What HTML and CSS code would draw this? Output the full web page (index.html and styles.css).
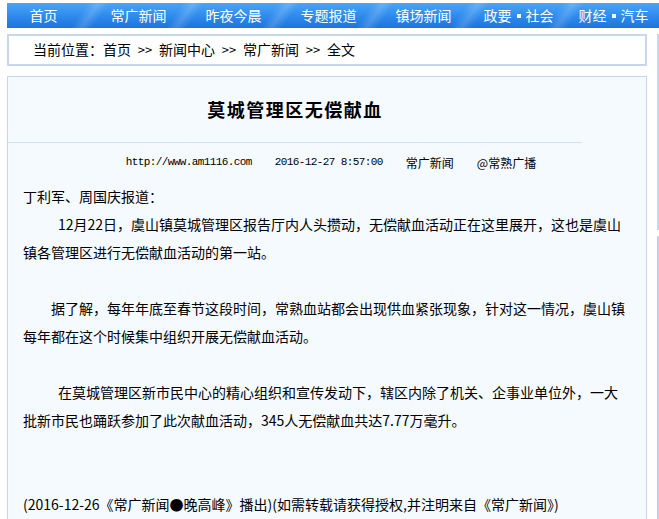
FILE: index.html
```html
<!DOCTYPE html>
<html lang="zh-CN">
<head>
<meta charset="utf-8">
<title>莫城管理区无偿献血</title>
<link rel="stylesheet" href="styles.css">
</head>
<body>
<div class="page">
  <nav class="nav">
    <ul class="nav-list">
      <li class="nav-item">首页</li>
      <li class="nav-item">常广新闻</li>
      <li class="nav-item">昨夜今晨</li>
      <li class="nav-item">专题报道</li>
      <li class="nav-item">镇场新闻</li>
      <li class="nav-item">政要<span class="dot"></span>社会</li>
      <li class="nav-item">财经<span class="dot"></span>汽车</li>
    </ul>
  </nav>
  <div class="layout">
    <main class="main">
      <div class="crumb">当前位置：首页<span class="sep">&gt;&gt;</span>新闻中心<span class="sep">&gt;&gt;</span>常广新闻<span class="sep">&gt;&gt;</span>全文</div>
      <article class="article">
        <div class="head">
          <h1 class="title">莫城管理区无偿献血</h1>
        </div>
        <div class="meta">
          <span class="mono url">http://www.am1116.com</span>
          <span class="mono date">2016-12-27 8:57:00</span>
          <span class="src">常广新闻</span>
          <span class="src">@常熟广播</span>
        </div>
        <div class="body">
          <p class="line">丁利军、周国庆报道：</p>
          <p class="line ind-a">12月22日，虞山镇莫城管理区报告厅内人头攒动，无偿献血活动正在这里展开，这也是虞山</p>
          <p class="line">镇各管理区进行无偿献血活动的第一站。</p>
          <p class="line blank"></p>
          <p class="line ind-b">据了解，每年年底至春节这段时间，常熟血站都会出现供血紧张现象，针对这一情况，虞山镇</p>
          <p class="line">每年都在这个时候集中组织开展无偿献血活动。</p>
          <p class="line blank"></p>
          <p class="line ind-a">在莫城管理区新市民中心的精心组织和宣传发动下，辖区内除了机关、企事业单位外，一大</p>
          <p class="line">批新市民也踊跃参加了此次献血活动，345人无偿献血共达7.77万毫升。</p>
          <p class="line blank"></p>
          <p class="line blank"></p>
          <p class="line">(2016-12-26《常广新闻●晚高峰》播出)(如需转载请获得授权,并注明来自《常广新闻》)</p>
        </div>
      </article>
    </main>
    <aside class="side">
      <div class="side-box"></div>
      <div class="side-box2"></div>
    </aside>
  </div>
</div>
</body>
</html>
```

FILE: styles.css
```css
html, body {
  margin: 0;
  padding: 0;
  background: #ffffff;
  overflow: hidden;
}
body {
  width: 659px;
  height: 519px;
  font-family: "Noto Sans CJK SC", "Liberation Sans", sans-serif;
  font-size: 14px;
  color: #000;
}
.page {
  padding: 3px 0 0 7px;
  overflow: hidden;
}
.nav {
  height: 25px;
  background: linear-gradient(#4aa5f6, #2f8cee 50%, #1c74dc);
  overflow: hidden;
}
.nav-list {
  list-style: none;
  margin: 0 0 0 -11px;
  padding: 0;
  display: flex;
  height: 25px;
}
.nav-item {
  position: relative;
  flex: 0 0 95px;
  text-align: center;
  line-height: 25px;
  color: #fff;
  font-size: 14px;
  white-space: nowrap;
}
.nav-item::before {
  content: "";
  position: absolute;
  top: 0;
  bottom: 0;
  left: -12px;
  width: 22px;
  transform: skewX(-35deg);
  background: linear-gradient(90deg, rgba(255,255,255,0), rgba(255,255,255,0.16), rgba(255,255,255,0));
}
.nav-item:first-child::before {
  display: none;
}
.dot {
  display: inline-block;
  width: 4px;
  height: 4px;
  background: #fff;
  margin: 0 5px;
  vertical-align: middle;
  position: relative;
  top: -1px;
}
.layout {
  display: flex;
  gap: 10px;
  margin-top: 6px;
}
.main {
  flex: 0 0 640px;
  width: 640px;
}
.crumb {
  box-sizing: border-box;
  height: 32px;
  border: 2px solid #c9d7ec;
  padding-left: 24px;
  line-height: 27px;
  font-size: 14px;
  white-space: nowrap;
}
.sep {
  display: inline-block;
  width: 28px;
  text-align: center;
  font-size: 13px;
}
.article {
  margin-top: 10px;
  border: 1px solid #c9d7ec;
  border-bottom: none;
  background: #f5faff;
  height: 460px;
}
.head {
  width: 574px;
  border-bottom: 1px solid #cfe2f7;
}
.title {
  margin: 0;
  height: 65px;
  line-height: 65px;
  text-align: center;
  font-size: 18px;
  font-weight: 700;
  letter-spacing: 1.5px;
}
.meta {
  height: 39px;
  line-height: 39px;
  display: flex;
  justify-content: center;
  gap: 23px;
  font-size: 12px;
  white-space: nowrap;
  padding-left: 8px;
}
.mono {
  font-family: "Liberation Mono", "DejaVu Sans Mono", monospace;
  font-size: 11px;
  letter-spacing: -0.6px;
}
.body {
  padding: 0 0 0 15px;
}
.line {
  margin: 0;
  height: 28px;
  line-height: 28px;
  white-space: nowrap;
}
.ind-a {
  padding-left: 35px;
}
.ind-b {
  padding-left: 28px;
}
.side {
  flex: 1 1 auto;
  min-width: 0;
}
.side-box {
  box-sizing: border-box;
  height: 196px;
  border: 2px solid #c9d7ec;
  border-right: none;
  background: #f5faff;
}
.side-box2 {
  margin-top: 6px;
  height: 290px;
  border-left: 2px solid #c8c8ea;
  border-top: 1px solid #e6e6f4;
}
```
